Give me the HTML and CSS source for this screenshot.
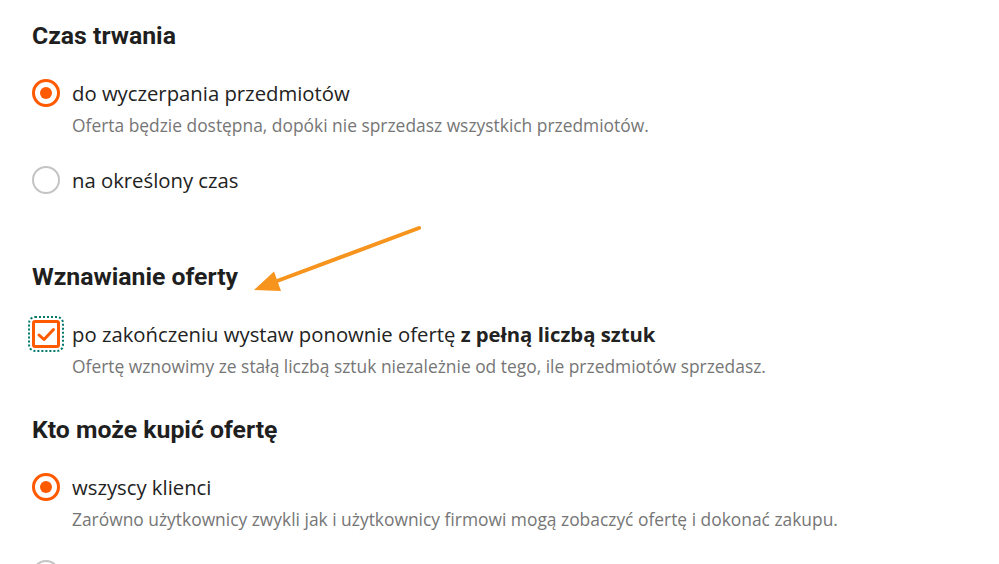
FILE: index.html
```html
<!DOCTYPE html>
<html lang="pl">
<head>
<meta charset="utf-8">
<link rel="stylesheet" href="styles.css">
</head>
<body>
<main class="page">
  <section class="section section--first">
    <h2 class="heading">Czas trwania</h2>
    <div class="option">
      <div class="row"><span class="radio radio--on"></span><span class="label">do wyczerpania przedmiotów</span></div>
      <p class="desc">Oferta będzie dostępna, dopóki nie sprzedasz wszystkich przedmiotów.</p>
    </div>
    <div class="option">
      <div class="row"><span class="radio"></span><span class="label">na określony czas</span></div>
    </div>
  </section>

  <section class="section section--arrow">
    <h2 class="heading">Wznawianie oferty</h2>
    <svg class="arrow" width="200" height="100" viewBox="0 0 200 100">
      <line x1="179" y1="28" x2="37" y2="81" stroke="#f7941d" stroke-width="4" stroke-linecap="round"/>
      <polygon points="14,90 34,71.5 41,91" fill="#f7941d"/>
    </svg>
    <div class="option">
      <div class="row"><span class="checkbox"><svg width="22" height="22" viewBox="0 0 22 22"><path d="M4 12 L9 16.5 L18.5 6.5" fill="none" stroke="#ff5a00" stroke-width="3" stroke-linecap="round" stroke-linejoin="round"/></svg></span><span class="label">po zakończeniu wystaw ponownie ofertę <b>z pełną liczbą sztuk</b></span></div>
      <p class="desc">Ofertę wznowimy ze stałą liczbą sztuk niezależnie od tego, ile przedmiotów sprzedasz.</p>
    </div>
  </section>

  <section class="section">
    <h2 class="heading">Kto może kupić ofertę</h2>
    <div class="option">
      <div class="row"><span class="radio radio--on"></span><span class="label">wszyscy klienci</span></div>
      <p class="desc">Zarówno użytkownicy zwykli jak i użytkownicy firmowi mogą zobaczyć ofertę i dokonać zakupu.</p>
    </div>
    <div class="option">
      <div class="row"><span class="radio"></span></div>
    </div>
  </section>
</main>
</body>
</html>
```
FILE: styles.css
```css
html, body {
  margin: 0;
  padding: 0;
  background: #fff;
}
body {
  font-family: "Open Sans", "Liberation Sans", sans-serif;
  color: #222;
  overflow: hidden;
  height: 564px;
}
.page {
  padding: 20px 0 0 32px;
}
.section {
  display: flex;
  flex-direction: column;
  margin-bottom: 36px;
}
.section--first {
  padding-bottom: 31px;
}
.section--arrow {
  position: relative;
}
.arrow {
  position: absolute;
  left: 208px;
  top: -61px;
}
.heading {
  font-family: Roboto, "Liberation Sans", sans-serif;
  font-weight: 700;
  font-size: 24.8px;
  line-height: 32px;
  margin: 0 0 27px 0;
  color: #1f1f1f;
}
.option {
  display: flex;
  flex-direction: column;
  margin-bottom: 29px;
}
.option:last-child {
  margin-bottom: 0;
}
.row {
  display: flex;
  align-items: center;
  gap: 12px;
  height: 28px;
}
.label {
  font-size: 20.3px;
  line-height: 28px;
  color: #222;
}
.label b {
  font-weight: 700;
}
.desc {
  margin: 6px 0 0 40px;
  font-size: 17.4px;
  line-height: 24px;
  color: #767676;
}
.radio {
  box-sizing: border-box;
  width: 28px;
  height: 28px;
  border-radius: 50%;
  border: 2px solid #c4c4c4;
  display: flex;
  align-items: center;
  justify-content: center;
  flex: none;
}
.radio--on {
  border: 3px solid #ff5a00;
}
.radio--on::after {
  content: "";
  width: 12px;
  height: 12px;
  border-radius: 50%;
  background: #ff5a00;
}
.checkbox {
  box-sizing: border-box;
  width: 28px;
  height: 28px;
  border: 3px solid #ff5a00;
  border-radius: 3px;
  display: flex;
  align-items: center;
  justify-content: center;
  outline: 2px dotted #00796b;
  outline-offset: 2px;
  flex: none;
}
```
